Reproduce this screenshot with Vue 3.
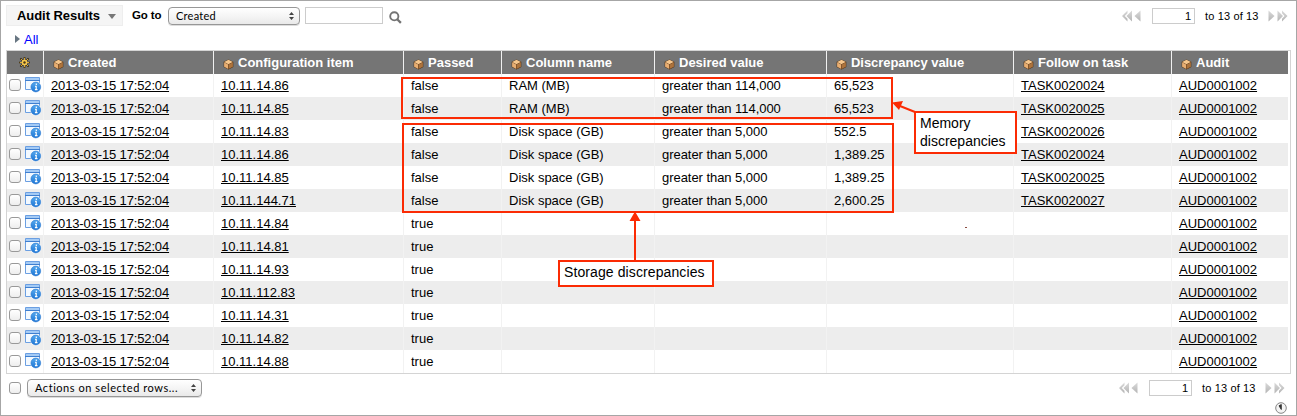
<script setup>
const columns = [
  { label: 'Created', cls: 'created', w: 170 },
  { label: 'Configuration item', cls: 'ci', w: 190 },
  { label: 'Passed', cls: 'passed', w: 98 },
  { label: 'Column name', cls: 'colname', w: 153 },
  { label: 'Desired value', cls: 'desired', w: 172 },
  { label: 'Discrepancy value', cls: 'discrepancy', w: 187 },
  { label: 'Follow on task', cls: 'task', w: 158 },
  { label: 'Audit', cls: 'audit', w: 117 },
]
const data = [
  ['10.11.14.86', 'false', 'RAM (MB)', 'greater than 114,000', '65,523', 'TASK0020024'],
  ['10.11.14.85', 'false', 'RAM (MB)', 'greater than 114,000', '65,523', 'TASK0020025'],
  ['10.11.14.83', 'false', 'Disk space (GB)', 'greater than 5,000', '552.5', 'TASK0020026'],
  ['10.11.14.86', 'false', 'Disk space (GB)', 'greater than 5,000', '1,389.25', 'TASK0020024'],
  ['10.11.14.85', 'false', 'Disk space (GB)', 'greater than 5,000', '1,389.25', 'TASK0020025'],
  ['10.11.144.71', 'false', 'Disk space (GB)', 'greater than 5,000', '2,600.25', 'TASK0020027'],
  ['10.11.14.84', 'true'],
  ['10.11.14.81', 'true'],
  ['10.11.14.93', 'true'],
  ['10.11.112.83', 'true'],
  ['10.11.14.31', 'true'],
  ['10.11.14.82', 'true'],
  ['10.11.14.88', 'true'],
]
const rows = data.map((r) => [
  '2013-03-15 17:52:04', r[0], r[1], r[2] || '', r[3] || '', r[4] || '', r[5] || '', 'AUD0001002',
])
const linked = [0, 1, 6, 7]
</script>

<template>
  <div class="page">
    <svg class="defs" width="0" height="0" aria-hidden="true">
      <defs>
        <linearGradient id="ball" x1="0" y1="0" x2="0" y2="1">
          <stop offset="0" stop-color="#55a9ee" />
          <stop offset="1" stop-color="#1c74d4" />
        </linearGradient>
        <linearGradient id="pager" x1="0" y1="0" x2="0" y2="1">
          <stop offset="0" stop-color="#dadada" />
          <stop offset="1" stop-color="#b4b4b4" />
        </linearGradient>
        <symbol id="cube" viewBox="0 0 11 11">
          <path d="M5.5.5 10.3 2.7V8L5.5 10.6.7 8V2.7z" fill="#4a2c10" />
          <path d="M5.5.8 9.9 2.9 5.4 5.2 1.1 3z" fill="#f6c68c" />
          <path d="M1.1 3.3 5.2 5.4V9.9L1.1 7.7z" fill="#e8ae72" />
          <path d="M5.6 5.4 9.9 3.3V7.7L5.6 9.9z" fill="#ad733c" />
        </symbol>
        <symbol id="info" viewBox="0 0 17 16">
          <path d="M.5.5h14v12H.5z" fill="#f3f9ff" stroke="#6b9fe2" />
          <path d="M1 1h13v2H1z" fill="#a5cbf5" />
          <path d="M0 3.5h15" stroke="#3f7fd0" />
          <circle cx="10.800" cy="10" r="5.6" fill="#fff" />
          <circle cx="10.800" cy="10" r="4.900" fill="url(#ball)" stroke="#2b78d0" stroke-width=".6" />
          <path d="M11.300 6.600v1.500M10.100 9.300h1.100v3M9.900 12.600h2.600" fill="none" stroke="#fff" stroke-width="1.200" />
        </symbol>
        <symbol id="prev" viewBox="0 0 20 12">
          <path d="M6.5.5 1 6l5.5 5.5V8.8L3.800 6l2.700-2.800zM11 .5 5.500 6l5.500 5.500z" fill="url(#pager)" />
          <path d="M19.500.5 13.500 6l6 5.500z" fill="url(#pager)" />
        </symbol>
        <symbol id="next" viewBox="0 0 20 12">
          <path d="M.5.5 6.500 6l-6 5.500z" fill="url(#pager)" />
          <path d="M9.500.5 15 6l-5.500 5.500zM14 .5 19.500 6 14 11.500V8.800L16.600 6 14 3.200z" fill="url(#pager)" />
        </symbol>
      </defs>
    </svg>

    <header class="toolbar">
      <div class="title"><span>Audit Results</span><i class="down"></i></div>
      <b class="goto">Go to</b>
      <div class="select select-field"><span>Created</span><svg width="5" height="8" viewBox="0 0 5 8"><path d="M0 3 2.5 0 5 3zM0 5h5L2.5 8z" fill="#444" /></svg></div>
      <div class="search-box"></div>
      <svg class="magnifier" width="13" height="13" viewBox="0 0 13 13"><circle cx="5.3" cy="5.3" r="4.1" fill="none" stroke="#737373" stroke-width="1.9" /><path d="m8.2 8.2 3.7 3.7" stroke="#737373" stroke-width="2.3" /></svg>
      <div class="pager">
        <svg width="20" height="12"><use href="#prev" /></svg>
        <span class="page-no">1</span>
        <span class="range">to 13 of 13</span>
        <svg width="20" height="12"><use href="#next" /></svg>
      </div>
    </header>

    <div class="crumbs"><i class="right"></i><a>All</a></div>

    <div class="list">
      <table>
        <colgroup>
          <col class="tools">
          <col v-for="c in columns" :key="c.label" :style="{ width: c.w + 'px' }">
        </colgroup>
        <thead>
          <tr>
            <th class="gear">
              <svg width="11" height="11" viewBox="0 0 11 11"><path d="M5.5 0v11M0 5.5h11M1.4 1.4l8.2 8.2M9.6 1.4 1.4 9.6" stroke="#33260c" stroke-width="1.7" /><path d="M5.5 .8v9.4M.8 5.5h9.4M2 2l7 7M9 2 2 9" stroke="#edb83c" stroke-width=".9" /><circle cx="5.5" cy="5.5" r="2.7" fill="#f7c94e" /><circle cx="5.5" cy="5.5" r="1.2" fill="#4a3817" /></svg>
            </th>
            <th v-for="c in columns" :key="c.label" :class="c.cls">
              <div class="head"><svg width="11" height="11"><use href="#cube" /></svg><span>{{ c.label }}</span></div>
            </th>
          </tr>
        </thead>
        <tbody>
          <tr v-for="(row, i) in rows" :key="i">
            <td class="mark"><div><i class="check"></i><svg width="17" height="16"><use href="#info" /></svg></div></td>
            <td v-for="(v, j) in row" :key="j" :class="columns[j].cls"><a v-if="v && linked.includes(j)">{{ v }}</a><span v-else>{{ v }}</span></td>
          </tr>
        </tbody>
      </table>
    </div>

    <footer class="bottom">
      <i class="check"></i>
      <div class="select select-actions"><span>Actions on selected rows...</span><svg width="5" height="8" viewBox="0 0 5 8"><path d="M0 3 2.5 0 5 3zM0 5h5L2.5 8z" fill="#444" /></svg></div>
      <div class="pager">
        <svg width="20" height="12"><use href="#prev" /></svg>
        <span class="page-no">1</span>
        <span class="range">to 13 of 13</span>
        <svg width="20" height="12"><use href="#next" /></svg>
      </div>
    </footer>
    <div class="timing"><svg width="12" height="12" viewBox="0 0 12 12"><circle cx="6" cy="6" r="5.3" fill="#f4f4f4" stroke="#858585" /><path d="M6.300 2.500v5L4 3.800z" fill="#333" stroke="#333" stroke-width=".9" /></svg></div>

    <svg class="lines" width="1297" height="416" viewBox="0 0 1297 416">
      <g fill="none" stroke="#fb2b04" stroke-width="2">
        <rect x="402" y="78" width="490" height="40" />
        <rect x="403" y="124" width="490" height="88" />
        <path d="M635 262V218M915 112 900 106" />
      </g>
      <path d="M635 211.500 629.500 221h11zM892 102.500 903 101l-4 9z" fill="#fb2b04" />
      <path d="M957 153.500h2M965 227.500h2" stroke="#8a4a40" />
    </svg>
    <div class="note memory">Memory<br>discrepancies</div>
    <div class="note storage">Storage discrepancies</div>
  </div>
</template>

<style scoped>
.page {
  position: relative;
  box-sizing: border-box;
  width: 1297px;
  height: 416px;
  border: 1px solid #a6a6a6;
  background: #fff;
  color: #000;
  font: 13px/15px "Liberation Sans", Arial, sans-serif;
  overflow: hidden;
}
.defs { position: absolute; }
svg { display: block; flex: none; }
.toolbar { display: flex; align-items: center; height: 30px; padding-left: 5px; }
.title {
  display: flex; align-items: center; justify-content: space-between;
  box-sizing: border-box; width: 117px; height: 21px; padding: 0 6px 0 10px;
  border: 1px solid #eee; background: #f5f5f5; margin-bottom: 2px;
  font-weight: bold; letter-spacing: -0.06px; white-space: nowrap;
}
.down { border: 4.5px solid transparent; border-top: 5px solid #777; border-bottom: 0; margin-top: 2px; }
.goto { width: 36px; margin: 0 0 2px 9px; font-size: 11.5px; letter-spacing: -0.1px; white-space: nowrap; }
.select {
  display: flex; align-items: center; justify-content: space-between;
  box-sizing: border-box; height: 18px; padding: 0 5px 0 7px;
  border: 1px solid #979797; border-radius: 4px;
  background: linear-gradient(#fff, #f5f5f5 50%, #e9e9e9);
  box-shadow: 0 1px 0 #ddd;
  font: 11px/16px Lato, "Open Sans", sans-serif; white-space: nowrap;
}
.select-field { width: 132px; letter-spacing: 0.25px; }
.search-box { box-sizing: border-box; width: 78px; height: 17px; margin: 0 6px 1px 5px; border: 1px solid #ccc; }
.magnifier { margin-top: 3px; }
.pager { display: flex; align-items: center; margin-left: auto; font-size: 11px; }
.toolbar .pager { margin-right: 8px; }
.page-no {
  box-sizing: border-box; width: 43px; height: 16px; margin: 0 10px 0 11px; padding-right: 3px;
  border: 1px solid #ccc; line-height: 15px; text-align: right;
}
.range { width: 63px; line-height: 14px; letter-spacing: 0.15px; white-space: nowrap; }
.toolbar .range { margin-bottom: 1px; }
.crumbs { display: flex; align-items: center; gap: 4px; height: 16px; padding: 0 0 2px 14px; }
.crumbs a { color: #00f; }
.right { border: 4px solid transparent; border-left: 5px solid #687682; border-right: 0; }
.list { box-sizing: border-box; width: 1285px; margin: 1px 0 0 5px; padding-right: 2px; border: 1px solid #d4d4d4; }
table { width: 1281px; border-collapse: separate; border-spacing: 0; table-layout: fixed; }
.tools { width: 36px; }
th, td { box-sizing: border-box; height: 23px; padding: 0; text-align: left; vertical-align: middle; white-space: nowrap; }
th + th { border-left: 1px solid #f0f0f0; padding-left: 9px; }
th { background: #757575; color: #fff; font-weight: bold; }
.head { display: flex; align-items: center; gap: 4px; }
.head svg { margin-top: 3px; }
.head span { margin-bottom: 1px; }
.discrepancy .head { letter-spacing: -0.06px; }
.gear svg { margin-left: 12px; }
td + td { border-left: 1px solid #f2f2f2; padding-left: 7px; }
tbody tr:nth-child(even) { background: #ededed; }
td a { text-decoration: underline; text-decoration-thickness: 1px; text-decoration-skip-ink: none; text-underline-offset: 1px; }
td.created { letter-spacing: -0.14px; }
td.desired { letter-spacing: -0.05px; }
.mark div { display: flex; align-items: center; gap: 4px; padding: 0 0 1px 2px; }
.check { box-sizing: border-box; flex: none; width: 12px; height: 12px; border: 1px solid #999; border-radius: 3px; background: linear-gradient(#fff, #eee); }
.mark .check { margin-bottom: 1px; }
.bottom { display: flex; align-items: center; height: 28px; padding-left: 8px; }
.select-actions { width: 175px; margin-left: 6px; letter-spacing: 0.55px; }
.bottom .pager { margin-right: 11px; }
.timing { display: flex; justify-content: flex-end; padding-right: 9px; }
.lines { position: absolute; left: -1px; top: -1px; }
.note { position: absolute; box-sizing: border-box; border: 2px solid #fb2b04; background: #fff; font-size: 14px; white-space: nowrap; }
.memory { left: 913px; top: 110px; width: 103px; height: 43px; padding: 1px 4px; line-height: 18px; }
.storage { left: 557px; top: 259px; width: 156px; height: 27px; padding: 3px 4px; letter-spacing: 0.1px; }
</style>

<style>
body { margin: 0; background: #fff; }
</style>
